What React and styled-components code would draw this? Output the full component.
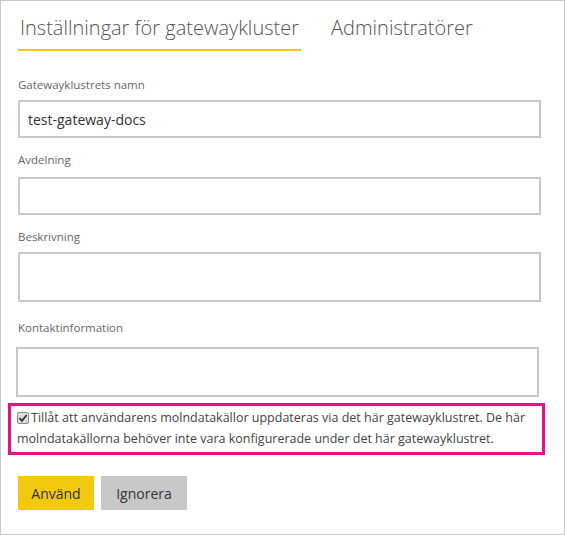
import React from "react";
import styled, { createGlobalStyle } from "styled-components";

const GlobalStyle = createGlobalStyle`
  html, body {
    margin: 0;
    padding: 0;
    background: #fff;
  }
  * {
    box-sizing: border-box;
  }
`;

const Frame = styled.div`
  width: 565px;
  height: 535px;
  border: 1px solid #c8c8c8;
  background: #fff;
  font-family: "Open Sans", "Liberation Sans", sans-serif;
  color: #333;
`;

const TabBar = styled.div`
  display: flex;
  gap: 28px;
  padding: 13px 0 0 17px;
`;

const Tab = styled.div`
  font-size: 20px;
  font-weight: 300;
  line-height: 28px;
  padding: 0 2px 7px;
  color: #555;
  border-bottom: 2px solid ${({ $active }) => ($active ? "#f2c811" : "transparent")};
  cursor: pointer;
`;

const Form = styled.div`
  padding: 0 22px 0 17px;
`;

const Field = styled.div`
  display: flex;
  flex-direction: column;
  margin-top: ${({ $top }) => $top}px;
`;

const Label = styled.label`
  font-size: 11.5px;
  line-height: 16px;
  color: #666;
  margin-bottom: ${({ $gap }) => $gap}px;
`;

const Input = styled.input`
  width: 523px;
  height: ${({ $h }) => $h}px;
  margin-left: ${({ $shift }) => $shift || 0}px;
  border: 2px solid #c8c8c8;
  padding: 0 8px;
  font-family: inherit;
  font-size: 14px;
  color: #333;
  outline: none;
`;

const Notice = styled.div`
  margin: 6px 0 0 -10px;
  width: 537px;
  border: 3px solid #e8118a;
  padding: 1px 4px 3px 6px;
  font-size: 12.5px;
  line-height: 21px;
  color: #444;
`;

const Check = styled.span`
  display: inline-flex;
  align-items: center;
  justify-content: center;
  width: 12px;
  height: 12px;
  margin-right: 2px;
  vertical-align: -1px;
  background: #dcdcdc;
  border: 1px solid #8a8a8a;
  border-radius: 2px;
`;

const Buttons = styled.div`
  display: flex;
  gap: 7px;
  margin-top: 21px;
`;

const Button = styled.button`
  width: ${({ $w }) => $w}px;
  height: 34px;
  padding: 0;
  border: none;
  background: ${({ $primary }) => ($primary ? "#f2c811" : "#c8c8c8")};
  font-family: inherit;
  font-size: 14px;
  color: #333;
  cursor: pointer;
`;

const fields = [
  { label: "Gatewayklustrets namn", value: "test-gateway-docs", top: 26, gap: 7, h: 38 },
  { label: "Avdelning", value: "", top: 14, gap: 9, h: 38 },
  { label: "Beskrivning", value: "", top: 14, gap: 7, h: 50 },
  { label: "Kontaktinformation", value: "", top: 18, gap: 11, h: 50, shift: -2 },
];

export default function App() {
  return (
    <>
      <GlobalStyle />
      <Frame>
        <TabBar>
          <Tab $active>Inställningar för gatewaykluster</Tab>
          <Tab>Administratörer</Tab>
        </TabBar>
        <Form>
          {fields.map((f) => (
            <Field key={f.label} $top={f.top}>
              <Label $gap={f.gap}>{f.label}</Label>
              <Input $h={f.h} $shift={f.shift} defaultValue={f.value} />
            </Field>
          ))}
          <Notice>
            <Check>
              <svg width="10" height="10" viewBox="0 0 10 10">
                <path d="M1.5 5.2 L4 7.8 L8.6 2" fill="none" stroke="#333" strokeWidth="1.8" />
              </svg>
            </Check>
            Tillåt att användarens molndatakällor uppdateras via det här gatewayklustret. De här
            molndatakällorna behöver inte vara konfigurerade under det här gatewayklustret.
          </Notice>
          <Buttons>
            <Button $primary $w={76}>Använd</Button>
            <Button $w={86}>Ignorera</Button>
          </Buttons>
        </Form>
      </Frame>
    </>
  );
}
